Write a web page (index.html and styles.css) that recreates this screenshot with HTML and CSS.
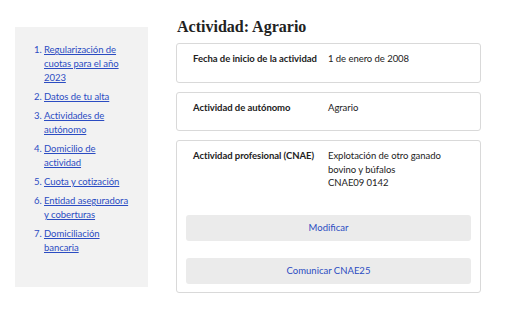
FILE: index.html
```html
<!DOCTYPE html>
<html lang="es">
<head>
<meta charset="utf-8">
<title>Actividad: Agrario</title>
<link rel="stylesheet" href="styles.css">
</head>
<body>
<div class="page">
  <nav class="sidebar">
    <ol class="steps">
      <li><a href="#">Regularización de cuotas para el año 2023</a></li>
      <li><a href="#">Datos de tu alta</a></li>
      <li><a href="#">Actividades de autónomo</a></li>
      <li><a href="#">Domicilio de actividad</a></li>
      <li><a href="#">Cuota y cotización</a></li>
      <li><a href="#">Entidad aseguradora y coberturas</a></li>
      <li><a href="#">Domiciliación bancaria</a></li>
    </ol>
  </nav>
  <main class="main">
    <h1 class="title">Actividad: Agrario</h1>
    <section class="card">
      <div class="row">
        <div class="label">Fecha de inicio de la actividad</div>
        <div class="value">1 de enero de 2008</div>
      </div>
    </section>
    <section class="card">
      <div class="row">
        <div class="label">Actividad de autónomo</div>
        <div class="value">Agrario</div>
      </div>
    </section>
    <section class="card">
      <div class="row">
        <div class="label">Actividad profesional (CNAE)</div>
        <div class="value">Explotación de otro ganado bovino y búfalos<br>CNAE09 0142</div>
      </div>
      <div class="actions">
        <button class="btn" type="button">Modificar</button>
        <button class="btn" type="button">Comunicar CNAE25</button>
      </div>
    </section>
  </main>
</div>
</body>
</html>
```
FILE: styles.css
```css
* { box-sizing: border-box; }
body {
  margin: 0;
  font-family: Lato, "Open Sans", sans-serif;
  color: #222;
  background: #fff;
}
.page {
  display: flex;
  align-items: flex-start;
  gap: 28px;
  padding-left: 15px;
}
.sidebar {
  width: 133px;
  margin-top: 27px;
  background: #f2f2f2;
  padding: 16px 15px 32px 0;
}
.steps {
  margin: 0;
  padding-left: 29px;
  font-size: 9.5px;
  line-height: 14px;
  letter-spacing: -0.05px;
  color: #2b4cc2;
}
.steps li { margin-bottom: 5px; }
.steps li:last-child { margin-bottom: 0; }
.steps a {
  color: #2b4cc2;
  text-decoration: underline;
  text-underline-offset: 1px;
}
.main {
  width: 305px;
  padding-top: 15px;
}
.title {
  margin: 0 0 4px 1px;
  font-family: "Liberation Serif", "DejaVu Serif", serif;
  font-weight: bold;
  font-size: 16px;
  line-height: 24px;
  color: #222;
}
.card {
  border: 1px solid #d9d9d9;
  border-radius: 3px;
  padding: 8px 9px;
  margin-bottom: 9px;
}
.row {
  display: grid;
  grid-template-columns: 135px 1fr;
  padding: 0 14px 0 7px;
  margin-bottom: 8px;
  font-size: 9.5px;
  line-height: 13.5px;
  letter-spacing: -0.05px;
}
.label { font-weight: bold; }
.actions {
  display: flex;
  flex-direction: column;
  gap: 17px;
  margin-top: 25px;
}
.btn {
  height: 26px;
  border: 0;
  border-radius: 3px;
  background: #ebebeb;
  color: #2b4cc2;
  font-family: Lato, "Open Sans", sans-serif;
  font-size: 9.5px;
  cursor: pointer;
}
```
